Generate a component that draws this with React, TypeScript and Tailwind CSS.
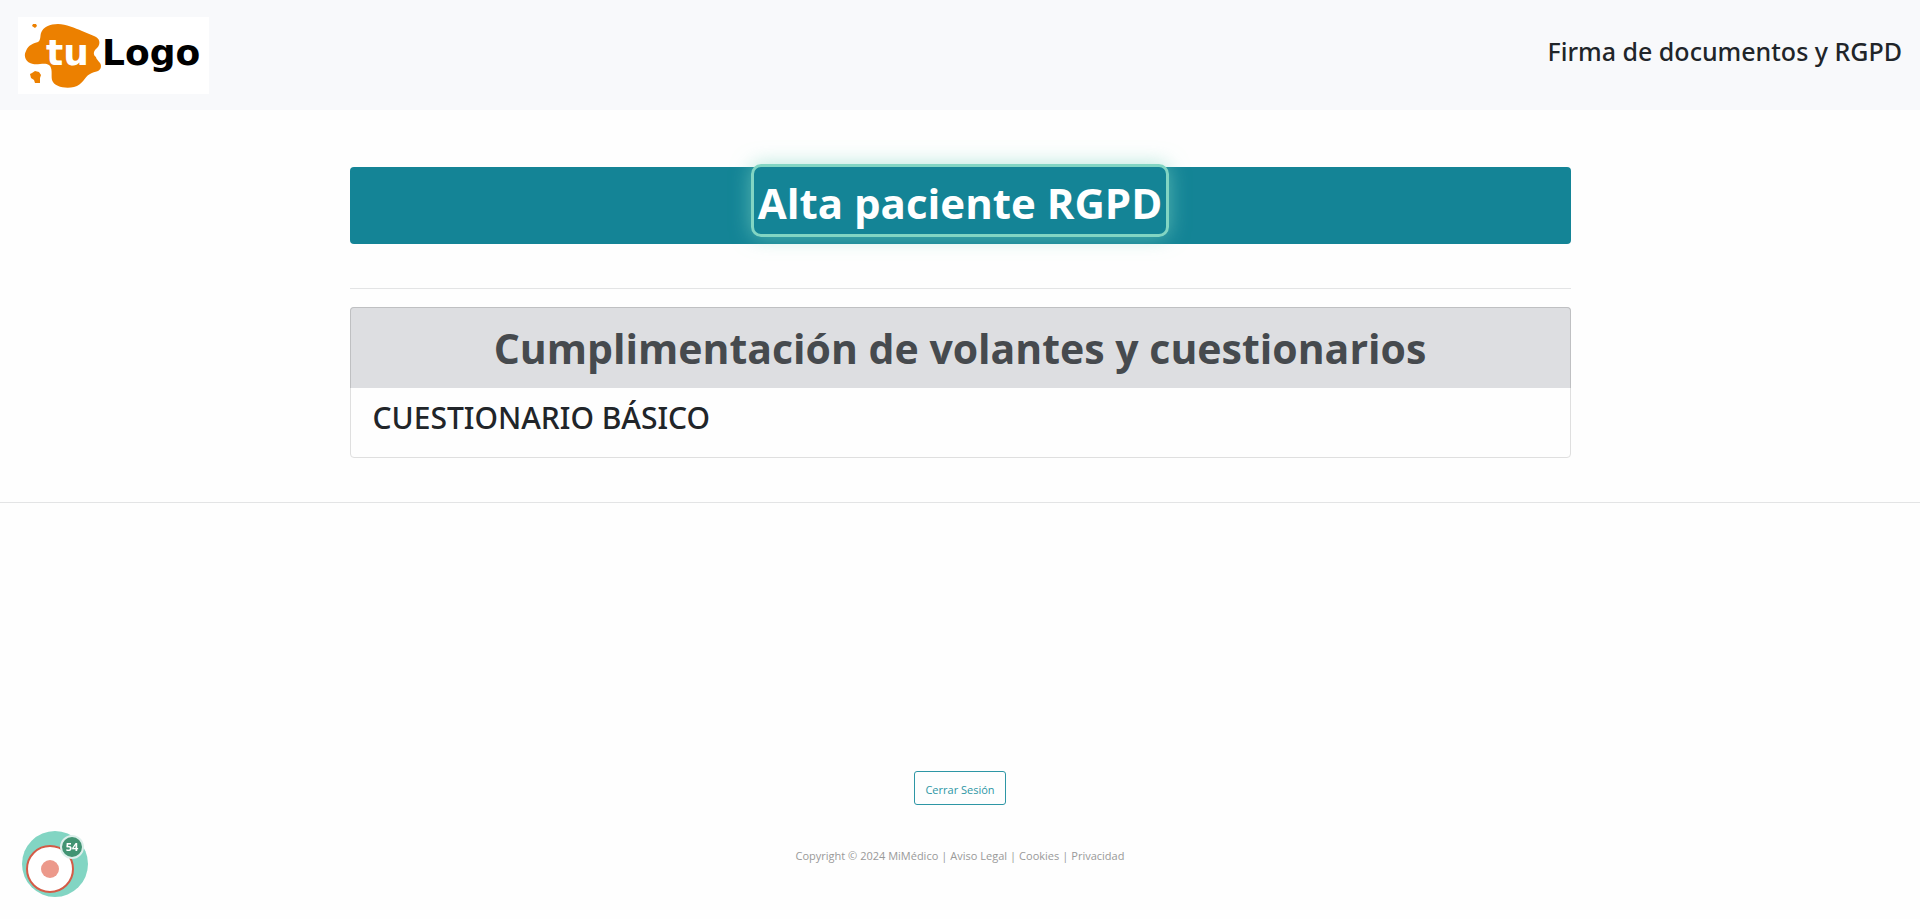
import React from 'react';

const footerLinks = ['Aviso Legal', 'Cookies', 'Privacidad'];

const Logo: React.FC = () => (
  <svg viewBox="0 0 191 77" className="h-[77px] w-[191px] bg-white" role="img" aria-label="tu Logo">
    <path
      fill="#ec8000"
      d="M23 16C25 10 32 7 40 7C48 7 57 11 64 14L76 19C82 21 83 27 79 31C75 34 75 38 78 40C78 43 83 45 83 49C83 55 77 54 72 57C66 60 65 68 56 70C48 72 36 70 34 63C33 58 35 51 31 48C27 45 21 48 15 47C8 46 5 39 8 34C10 28 16 26 20 25C23 23 22 19 23 16Z"
    />
    <path fill="#ec8000" d="M15 7L18 7L19 9L17 11L14 9Z" />
    <path fill="#ec8000" d="M14 56L17 54L21 55L23 58L22 61L22 66L17 66L16 63L13 61L12 57Z" />
    <g fontFamily="DejaVu Sans, sans-serif" fontWeight="700" fontSize="36">
      <text x="28" y="48" fill="#ffffff">
        tu
      </text>
      <text x="84" y="48" fill="#000000">
        Logo
      </text>
    </g>
  </svg>
);

const RecorderBadge: React.FC = () => (
  <button
    aria-label="Grabación, 54 pasos"
    className="fixed bottom-[22px] left-[22px] size-[66px] rounded-full bg-[#82d5c3]"
  >
    <span className="absolute bottom-1 left-1 flex size-12 items-center justify-center rounded-full border-2 border-[#d45b47] bg-white">
      <span className="size-[18px] rounded-full bg-[#ec998b]" />
    </span>
    <span className="absolute top-1 right-1 flex size-6 items-center justify-center rounded-full border-2 border-[#dcefeb] bg-[#429473] text-[11px] font-bold text-white">
      54
    </span>
  </button>
);

const App: React.FC = () => {
  return (
    <div className="flex min-h-screen flex-col bg-[#fefefe] font-['Open_Sans','Noto_Sans',sans-serif] text-[#212529]">
      <header className="flex items-start justify-between bg-[#f8f9fb] px-[18px] pt-[17px] pb-4">
        <Logo />
        <h1 className="pt-[18px] font-['Noto_Sans',sans-serif] text-[25px] leading-8 font-medium">
          Firma de documentos y RGPD
        </h1>
      </header>

      <main>
        <div className="mx-auto max-w-[1221px] pt-[57px]">
          <div className="flex h-[77px] justify-center rounded bg-[#148496]">
            <h2 className="-mt-[3px] h-[73px] rounded-[10px] border-3 border-[#82d5c3] px-1 text-[42px] leading-[72px] font-bold text-white shadow-[0_0_20px_rgba(130,213,195,0.6)]">
              Alta paciente RGPD
            </h2>
          </div>

          <hr className="mt-11 border-[#e3e4e5]" />

          <section className="mt-[18px] rounded border border-[#dfdfdf]">
            <h2 className="-mx-px -mt-px rounded-t border border-b-0 border-[#bfc0c2] bg-[#dddee1] text-center text-[41px] leading-[80px] font-bold text-[#464a4e]">
              Cumplimentación de volantes y cuestionarios
            </h2>
            <p className="px-[22px] pt-2 pb-[17px] font-['Noto_Sans',sans-serif] text-[30px] leading-[44px] font-medium">
              CUESTIONARIO BÁSICO
            </p>
          </section>
        </div>

        <hr className="mt-11 border-[#e3e4e5]" />
      </main>

      <footer className="mt-auto flex flex-col items-center pb-[53px]">
        <button className="rounded-[3px] border border-[#2d96a5] px-[10px] pt-1 text-[11px] leading-7 text-[#2d96a5]">
          Cerrar Sesión
        </button>
        <p className="mt-[41px] text-[11px] leading-5 text-[#999999]">
          Copyright © 2024 MiMédico
          {footerLinks.map((label) => (
            <React.Fragment key={label}>
              <span className="mx-[3px]">|</span>
              <a href="#">{label}</a>
            </React.Fragment>
          ))}
        </p>
      </footer>

      <RecorderBadge />
    </div>
  );
};

export default App;
